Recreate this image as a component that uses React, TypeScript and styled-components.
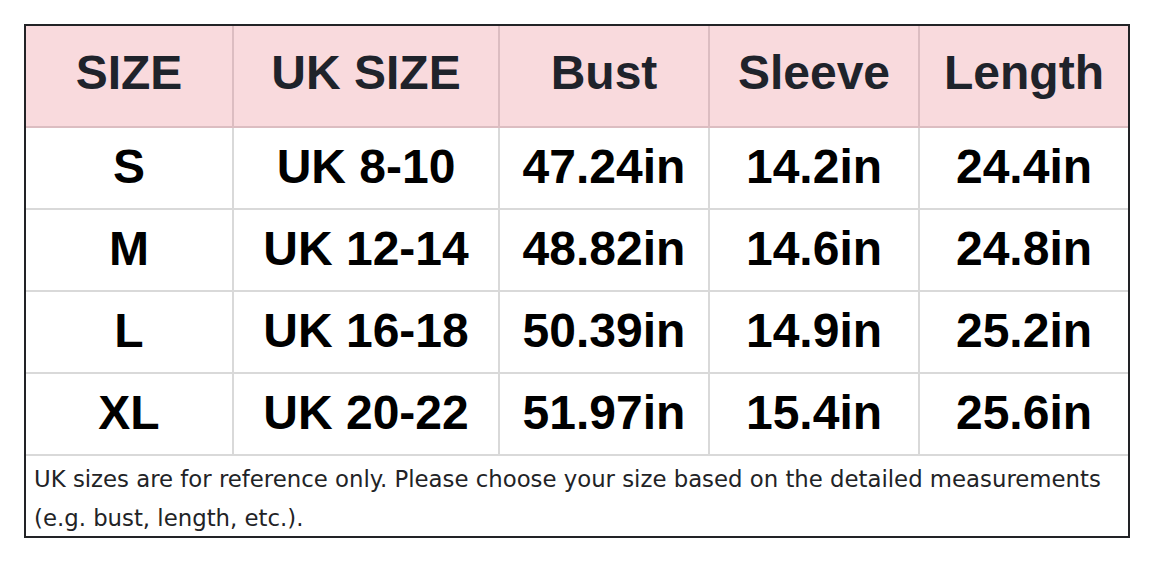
import styled, { createGlobalStyle } from 'styled-components';

type SizeRow = {
    size: string;
    uk: string;
    bust: string;
    sleeve: string;
    length: string;
};

const headers = ['SIZE', 'UK SIZE', 'Bust', 'Sleeve', 'Length'];

const rows: SizeRow[] = [
    { size: 'S', uk: 'UK 8-10', bust: '47.24in', sleeve: '14.2in', length: '24.4in' },
    { size: 'M', uk: 'UK 12-14', bust: '48.82in', sleeve: '14.6in', length: '24.8in' },
    { size: 'L', uk: 'UK 16-18', bust: '50.39in', sleeve: '14.9in', length: '25.2in' },
    { size: 'XL', uk: 'UK 20-22', bust: '51.97in', sleeve: '15.4in', length: '25.6in' },
];

const GlobalStyle = createGlobalStyle`
    html, body {
        margin: 0;
        padding: 0;
        background: #ffffff;
    }
    body {
        font-family: "Liberation Sans", Arial, sans-serif;
    }
`;

const Page = styled.div`
    padding: 24px 0 0 24px;
`;

const Table = styled.div`
    width: 1102px;
    border: 2px solid #222326;
    background: #ffffff;
`;

const Row = styled.div<{ $header?: boolean }>`
    display: grid;
    grid-template-columns: 206px 264px 208px 208px 208px;
    column-gap: 2px;
    height: ${(p) => (p.$header ? '100px' : '80px')};
    background: ${(p) => (p.$header ? '#dcbdc1' : '#d9d9d9')};
    border-bottom: 2px solid ${(p) => (p.$header ? '#dcbdc1' : '#d9d9d9')};
`;

const Cell = styled.div<{ $header?: boolean }>`
    display: flex;
    align-items: center;
    justify-content: center;
    box-sizing: border-box;
    padding-bottom: ${(p) => (p.$header ? '8px' : '4px')};
    background: ${(p) => (p.$header ? '#f9dadd' : '#ffffff')};
    color: ${(p) => (p.$header ? '#1f232b' : '#000000')};
    font-size: 48px;
    font-weight: 700;
    white-space: nowrap;
`;

const Note = styled.p`
    margin: 0;
    height: 80px;
    padding: 4px 8px 0 8px;
    box-sizing: border-box;
    font-family: "DejaVu Sans", Verdana, sans-serif;
    font-size: 22.8px;
    line-height: 39px;
    color: #222326;
`;

const App = () => {
    return (
        <Page>
            <GlobalStyle />
            <Table>
                <Row $header>
                    {headers.map((h) => (
                        <Cell $header key={h}>{h}</Cell>
                    ))}
                </Row>
                {rows.map((r) => (
                    <Row key={r.size}>
                        <Cell>{r.size}</Cell>
                        <Cell>{r.uk}</Cell>
                        <Cell>{r.bust}</Cell>
                        <Cell>{r.sleeve}</Cell>
                        <Cell>{r.length}</Cell>
                    </Row>
                ))}
                <Note>
                    UK sizes are for reference only. Please choose your size based on the detailed measurements (e.g. bust, length, etc.).
                </Note>
            </Table>
        </Page>
    );
};

export default App;
